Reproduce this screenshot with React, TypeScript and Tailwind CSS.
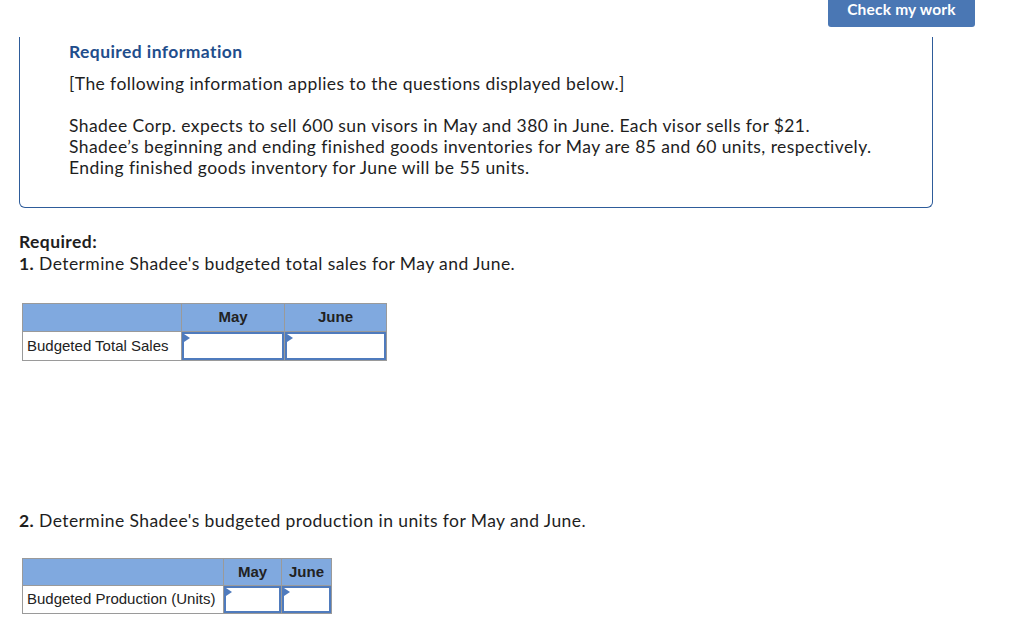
import React from "react"

const body = { fontFamily: "Lato, 'Open Sans', 'Liberation Sans', sans-serif" }
const cell = { fontFamily: "'Liberation Sans', Arial, sans-serif" }

function InputCell({ h }: { h: string }) {
  return (
    <td className="border border-[#9a9a9a] p-0 bg-white align-top">
      <div className={`relative w-full border-2 border-[#4f7bbd] bg-white ${h}`}>
        <span className="absolute left-0 top-0 h-0 w-0 border-y-[4px] border-l-[6px] border-y-transparent border-l-[#4f7bbd]" />
      </div>
    </td>
  )
}

export default function App() {
  return (
    <div className="min-h-[625px] w-[1024px] bg-white text-[#1e1e1e]" style={body}>
      {/* Top bar */}
      <div className="flex justify-end pr-[49px]">
        <button className="h-[27px] w-[147px] rounded-b-[3px] bg-[#4a77b4] pb-[8px] text-[15.5px] font-bold leading-[19px] tracking-[0.2px] text-white">
          Check my work
        </button>
      </div>

      {/* Info box */}
      <div className="ml-[19px] mt-[10px] w-[914px] rounded-b-[6px] border-x border-b border-[#2e5c9a] pb-[29px] pl-[49px] pr-[20px] text-[17.5px] tracking-[0.42px]">
        <h2 className="pt-[4px] font-bold leading-[22px] text-[#1f4e8c]">Required information</h2>
        <p className="mt-[10px] leading-[21px]">[The following information applies to the questions displayed below.]</p>
        <p className="mt-[21px] leading-[21px]">
          Shadee Corp. expects to sell 600 sun visors in May and 380 in June. Each visor sells for $21.
          <br />
          Shadee’s beginning and ending finished goods inventories for May are 85 and 60 units, respectively.
          <br />
          Ending finished goods inventory for June will be 55 units.
        </p>
      </div>

      {/* Part 1 */}
      <div className="ml-[19px] mt-[23px] text-[17.5px] leading-[22px] tracking-[0.42px]">
        <div className="font-bold">Required:</div>
        <div>
          <span className="font-bold">1.</span> Determine Shadee's budgeted total sales for May and June.
        </div>
      </div>

      <table className="ml-[22px] mt-[28px] border-collapse text-[15px] text-[#222]" style={cell}>
        <tbody>
          <tr className="h-[28px] bg-[#80a9df]">
            <td className="w-[159px] border border-[#9a9a9a]" />
            <td className="w-[103px] border border-[#9a9a9a] text-center font-bold">May</td>
            <td className="w-[102px] border border-[#9a9a9a] text-center font-bold">June</td>
          </tr>
          <tr>
            <td className="border border-[#9a9a9a] px-[4px]">Budgeted Total Sales</td>
            <InputCell h="h-[28px]" />
            <InputCell h="h-[28px]" />
          </tr>
        </tbody>
      </table>

      {/* Part 2 */}
      <div className="ml-[19px] mt-[149px] text-[17.5px] leading-[22px] tracking-[0.42px]">
        <span className="font-bold">2.</span> Determine Shadee's budgeted production in units for May and June.
      </div>

      <table className="ml-[22px] mt-[26px] border-collapse text-[15px] text-[#222]" style={cell}>
        <tbody>
          <tr className="h-[27px] bg-[#80a9df]">
            <td className="w-[201px] border border-[#9a9a9a]" />
            <td className="w-[58px] border border-[#9a9a9a] text-center font-bold">May</td>
            <td className="w-[50px] border border-[#9a9a9a] text-center font-bold">June</td>
          </tr>
          <tr>
            <td className="border border-[#9a9a9a] px-[4px]">Budgeted Production (Units)</td>
            <InputCell h="h-[27px]" />
            <InputCell h="h-[27px]" />
          </tr>
        </tbody>
      </table>
    </div>
  )
}
